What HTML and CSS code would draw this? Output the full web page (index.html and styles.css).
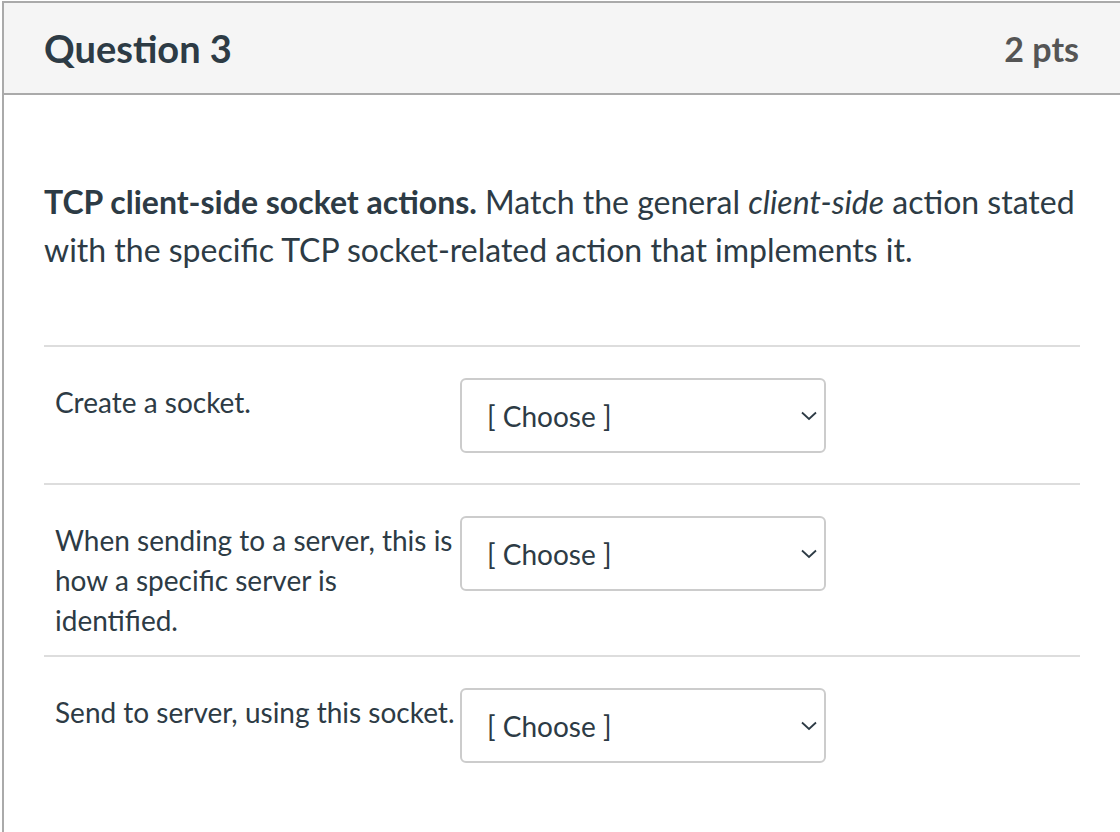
FILE: index.html
```html
<!DOCTYPE html>
<html>
<head>
<meta charset="utf-8">
<link rel="stylesheet" href="styles.css">
</head>
<body>

<div class="question">
	<div class="header">
		<h2 class="title">Question 3</h2>
		<span class="points">2 pts</span>
	</div>

	<div class="questionText">
		<p><strong>TCP client-side socket actions.</strong> Match the general <em>client-side</em> action stated with the specific TCP socket-related action that implements it.</p>
	</div>

	<div class="answers">
		<div class="answer">
			<div class="label">Create a socket.</div>
			<div class="select">
				<span>[ Choose ]</span>
				<svg class="chevron" width="16" height="10" viewBox="0 0 16 10"><path d="M1 1.5 L8 8 L15 1.5" fill="none" stroke="#2d3b45" stroke-width="1.8"/></svg>
			</div>
		</div>
		<div class="answer">
			<div class="label">When sending to a server, this is how a specific server is identified.</div>
			<div class="select">
				<span>[ Choose ]</span>
				<svg class="chevron" width="16" height="10" viewBox="0 0 16 10"><path d="M1 1.5 L8 8 L15 1.5" fill="none" stroke="#2d3b45" stroke-width="1.8"/></svg>
			</div>
		</div>
		<div class="answer">
			<div class="label">Send to server, using this socket.</div>
			<div class="select">
				<span>[ Choose ]</span>
				<svg class="chevron" width="16" height="10" viewBox="0 0 16 10"><path d="M1 1.5 L8 8 L15 1.5" fill="none" stroke="#2d3b45" stroke-width="1.8"/></svg>
			</div>
		</div>
	</div>
</div>

</body>
</html>
```

FILE: styles.css
```css
	body {
		margin: 0;
		overflow: hidden;
		background-color: #fff;
		font-family: Lato, "Open Sans", sans-serif;
		color: #2d3b45;
	}

	.question {
		margin: 1px 0 0 2px;
		border-style: solid;
		border-color: #aaa;
		border-width: 2px 0 0 2px;
		height: 900px;
	}

	.header {
		display: flex;
		justify-content: space-between;
		align-items: center;
		height: 90px;
		padding: 0 41px 0 40px;
		background-color: #f5f5f5;
		border-bottom: 2px solid #aaa;
	}

	.title {
		margin: 0;
		font-size: 38px;
		font-weight: 700;
		color: #2d3b45;
	}

	.points {
		font-size: 34px;
		font-weight: 700;
		color: #555;
	}

	.questionText {
		padding: 83px 40px 0 40px;
	}

	.questionText p {
		margin: 0;
		font-size: 32px;
		line-height: 48px;
	}

	.questionText em {
		font-style: italic;
	}

	.answers {
		margin: 71px 40px 0 40px;
	}

	.answer {
		display: flex;
		align-items: flex-start;
		padding: 31px 0 15px 11px;
		border-top: 2px solid #ddd;
	}

	.label {
		width: 403px;
		padding-top: 4px;
		font-size: 28px;
		line-height: 40px;
	}

	.select {
		display: flex;
		align-items: center;
		justify-content: space-between;
		box-sizing: border-box;
		width: 366px;
		height: 75px;
		margin: 0 0 15px 2px;
		padding: 0 7px 0 25px;
		border: 2px solid #ccc;
		border-radius: 6px;
		font-size: 28px;
	}

	.chevron {
		display: block;
	}
```
